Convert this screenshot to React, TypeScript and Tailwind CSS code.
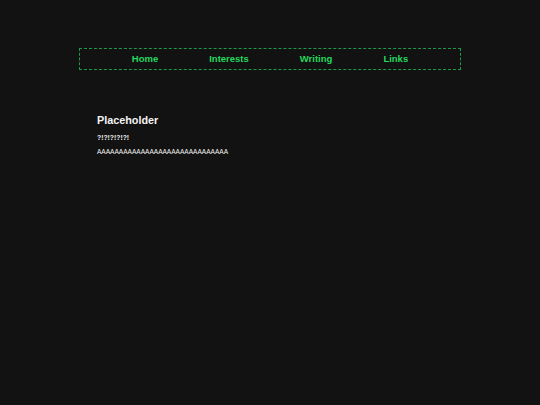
export default function App() {
  const links = ["Home", "Interests", "Writing", "Links"];
  return (
    <div className="min-h-[405px] w-full bg-[#121212] pt-[48px] font-['Liberation_Sans',Arial,sans-serif]">
      <nav className="mx-auto flex h-[22px] w-[382px] items-center justify-center gap-[51px] border border-dashed border-[#1c9a4c]">
        {links.map((l) => (
          <a key={l} href="#" className="text-[9.5px] font-bold leading-none text-[#25d85e]">
            {l}
          </a>
        ))}
      </nav>
      <main className="mx-auto w-[382px] pl-[18px] pt-[44px] text-[#f4f4f4]">
        <h2 className="text-[10.8px] font-bold leading-[13px]">Placeholder</h2>
        <p className="mt-[6px] text-[6.8px] font-bold leading-[9px]">?!?!?!?!?!</p>
        <p className="mt-[5px] text-[6.55px] leading-[9px]">AAAAAAAAAAAAAAAAAAAAAAAAAAAAAA</p>
      </main>
    </div>
  );
}
